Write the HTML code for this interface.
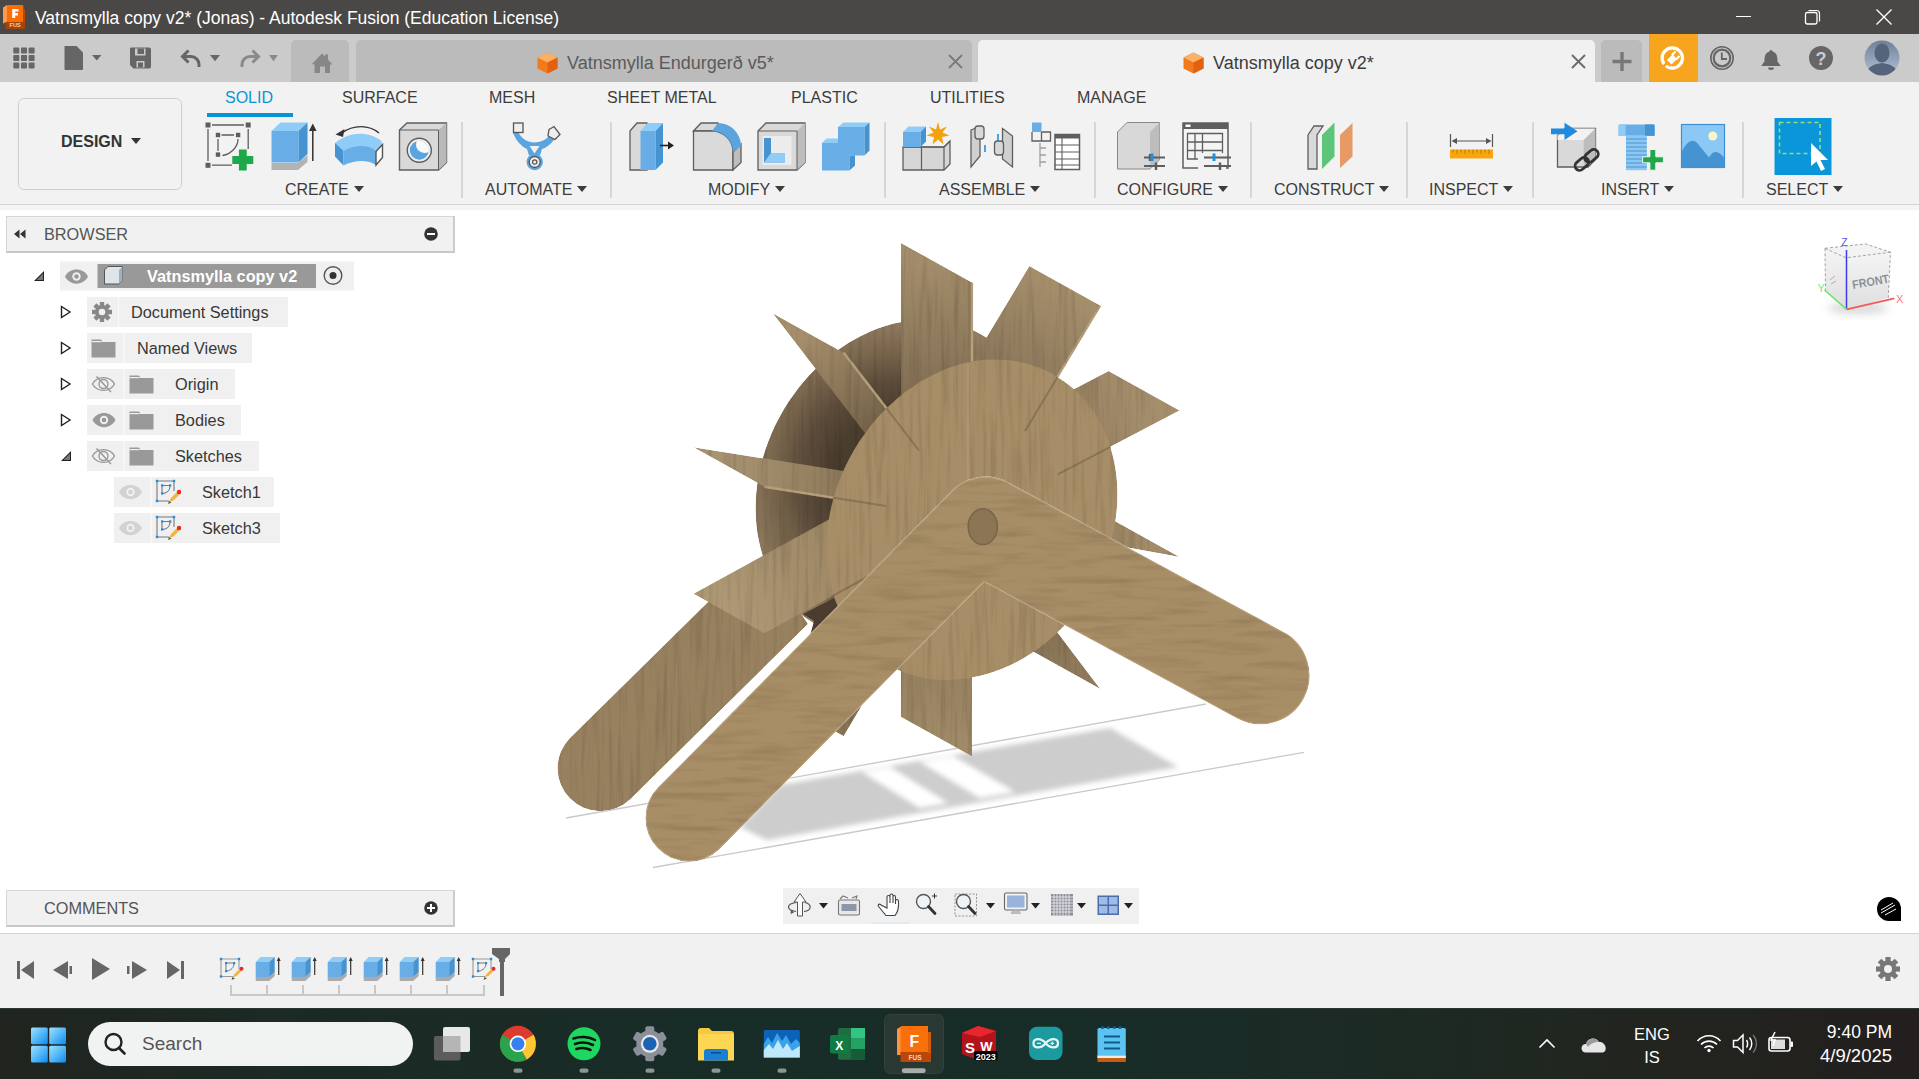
<!DOCTYPE html>
<html><head><meta charset="utf-8">
<style>
*{margin:0;padding:0;box-sizing:border-box}
html,body{width:1919px;height:1079px;overflow:hidden;background:#fff;font-family:"Liberation Sans",sans-serif;position:relative}
.a{position:absolute}
.t{position:absolute;white-space:nowrap;line-height:1}
#title{left:0;top:0;width:1919px;height:34px;background:#4a4846}
#tb{left:0;top:34px;width:1919px;height:48px;background:#cbcbcb}
#rib{left:0;top:82px;width:1919px;height:123px;background:#f2f2f2;border-bottom:1px solid #d3d3d3}
#rib2{left:0;top:205px;width:1919px;height:5px;background:#f4f4f4}
.rt{font-size:16px;color:#3c3c3c;top:90px}
.lbl{font-size:16px;color:#3c3c3c;top:182px}
.sep{position:absolute;top:122px;width:2px;height:76px;background:#d6d6d6}
.tri{display:inline-block;width:0;height:0;border-left:5px solid transparent;border-right:5px solid transparent;border-top:6px solid #3c3c3c;vertical-align:middle;margin-left:5px;position:relative;top:-2px}
#timeline{left:0;top:933px;width:1919px;height:75px;background:#f1f1f1;border-top:1px solid #d4d4d4}
#taskbar{left:0;top:1008px;width:1919px;height:71px;background:linear-gradient(90deg,#21241f 0%,#1c2924 14%,#182d28 40%,#192c27 62%,#1c2a24 72%,#22251f 84%,#231f1e 100%);border-top:1px solid #2c3633}
.row{position:absolute;height:30px;background:#f0f0f0}
.rowt{position:absolute;font-size:16px;color:#3a3a3a;top:7px;white-space:nowrap;line-height:1}
</style></head><body>

<!-- TITLE BAR -->
<div class="a" id="title">
  <svg class="a" style="left:0;top:0" width="34" height="34" viewBox="0 0 34 34">
    <path d="M3 7.5 L7 5 V22 L3 23.5Z" fill="#fb9a4c"/>
    <rect x="7" y="5" width="16.3" height="17" rx="1" fill="#fc6e04"/>
    <path d="M23.3 9 H25 V29 H23.3Z" fill="#b8480a"/>
    <path d="M5.5 22 H25 V29 H6.5 Q5.5 29 5.5 28Z" fill="#a4430b"/>
    <path d="M12.2 9 H18.5 V11.5 H15.2 V13 H18 V15.4 H15.2 V18 H12.2Z" fill="#fff"/>
    <text x="15.2" y="27.2" text-anchor="middle" font-family="Liberation Sans" font-weight="bold" font-size="5.6" fill="#f3d2bd">FUS</text>
  </svg>
  <div class="t" style="left:35px;top:10px;font-size:17.5px;color:#fff">Vatnsmylla copy v2* (Jonas) - Autodesk Fusion (Education License)</div>
  <div class="a" style="left:1736px;top:16px;width:15px;height:1.3px;background:#fff"></div>
  <svg class="a" style="left:1803px;top:8px" width="20" height="20" viewBox="0 0 20 20"><rect x="2.5" y="4.5" width="11.5" height="11.5" rx="1.8" fill="none" stroke="#fff" stroke-width="1.3"/><path d="M5.5 2.5 H13.5 a3 3 0 0 1 3 3 V13.5" fill="none" stroke="#fff" stroke-width="1.2"/></svg>
  <svg class="a" style="left:1874px;top:7px" width="20" height="20" viewBox="0 0 20 20"><path d="M2.5 2.5 L17.5 17.5 M17.5 2.5 L2.5 17.5" stroke="#fff" stroke-width="1.4"/></svg>
</div>

<!-- TOOLBAR -->
<div class="a" id="tb"></div>
<div class="a" style="left:291px;top:40px;width:58px;height:42px;background:#bbbbbb;border-radius:5px 5px 0 0"></div>
<div class="a" style="left:356px;top:40px;width:616px;height:42px;background:#bbbbbb;border-radius:5px 5px 0 0"></div>
<div class="a" style="left:978px;top:40px;width:617px;height:42px;background:#f1f1f1;border-radius:5px 5px 0 0"></div>
<div class="a" style="left:1601px;top:40px;width:41px;height:42px;background:#bbbbbb;border-radius:5px 5px 0 0"></div>
<div class="a" style="left:1649px;top:34px;width:49px;height:48px;background:#f7a51f"></div>
<!-- toolbar icons -->
<svg class="a" style="left:0;top:34px" width="350" height="48" viewBox="0 34 350 48">
  <g fill="#666">
    <rect x="13.3" y="47.5" width="6" height="6" rx="1"/><rect x="21" y="47.5" width="6" height="6" rx="1"/><rect x="28.6" y="47.5" width="6" height="6" rx="1"/>
    <rect x="13.3" y="55" width="6" height="6" rx="1"/><rect x="21" y="55" width="6" height="6" rx="1"/><rect x="28.6" y="55" width="6" height="6" rx="1"/>
    <rect x="13.3" y="62.5" width="6" height="6" rx="1"/><rect x="21" y="62.5" width="6" height="6" rx="1"/><rect x="28.6" y="62.5" width="6" height="6" rx="1"/>
    <path d="M64.5 46 H76.5 L83 52.5 V69 a1 1 0 0 1 -1 1 H65.5 a1 1 0 0 1 -1 -1Z"/>
    <path d="M92 55 H101.5 L96.75 60.5Z"/>
    <path d="M131 47.5 H149 a2 2 0 0 1 2 2 V66.5 a2 2 0 0 1 -2 2 H133.5 L130 65 V49.5 a2 2 0 0 1 1 -2Z"/>
    <path d="M210 55 H220 L215 61.3Z"/>
  </g>
  <g fill="#cbcbcb"><rect x="135" y="48.5" width="10.5" height="7" /><rect x="136.5" y="61" width="8" height="6.5"/></g>
  <rect x="137.5" y="48.5" width="6.5" height="5.5" fill="#666"/><rect x="138" y="62.5" width="5" height="5" fill="#666"/>
  <path d="M188.5 50.5 L182.5 56.5 L188.5 62.5 M183 56.5 H191 a8 8 0 0 1 8 8 V67" fill="none" stroke="#666" stroke-width="3"/>
  <path d="M252.5 50.5 L258.5 56.5 L252.5 62.5 M258 56.5 H250 a8 8 0 0 0 -8 8 V67" fill="none" stroke="#8a8a8a" stroke-width="3"/>
  <path d="M269 55 H278 L273.5 61.3Z" fill="#8a8a8a"/>
  <path d="M312 64 L322 53.5 L325 56.7 V54.5 H328 V59.8 L332.5 64.5 H330 V73 H325 V66.5 H320 V73 H314.5 V64.5 Z" fill="#878787"/>
</svg>
<svg class="a" style="left:536px;top:51px" width="24" height="24" viewBox="0 0 24 24">
  <path d="M11.5 1.5 L21.5 6.5 V17.5 L11.5 22.5 L1.5 17.5 V6.5Z" fill="#f07a1c"/>
  <path d="M11.5 1.5 L21.5 6.5 L11.5 11.5 L1.5 6.5Z" fill="#fbb067"/>
  <path d="M11.5 11.5 L21.5 6.5 V17.5 L11.5 22.5Z" fill="#e2610f"/>
</svg>
<svg class="a" style="left:1182px;top:51px" width="24" height="24" viewBox="0 0 24 24">
  <path d="M11.5 1.5 L21.5 6.5 V17.5 L11.5 22.5 L1.5 17.5 V6.5Z" fill="#f07a1c"/>
  <path d="M11.5 1.5 L21.5 6.5 L11.5 11.5 L1.5 6.5Z" fill="#fbb067"/>
  <path d="M11.5 11.5 L21.5 6.5 V17.5 L11.5 22.5Z" fill="#e2610f"/>
</svg>
<svg class="a" style="left:947px;top:53px" width="17" height="17" viewBox="0 0 17 17"><path d="M2 2 L15 15 M15 2 L2 15" stroke="#7a7a7a" stroke-width="1.8"/></svg>
<svg class="a" style="left:1570px;top:53px" width="17" height="17" viewBox="0 0 17 17"><path d="M2 2 L15 15 M15 2 L2 15" stroke="#6a6a6a" stroke-width="1.8"/></svg>
<svg class="a" style="left:1600px;top:34px" width="319" height="48" viewBox="1600 34 319 48">
  <path d="M1612.5 61.5 H1631.5 M1622 52 V71" stroke="#777" stroke-width="3.4"/>
  <circle cx="1672.3" cy="58" r="10.2" fill="none" stroke="#fff" stroke-width="3.2"/>
  <path d="M1665 62 L1672 55 L1676.5 59.5 L1669.5 66.5Z" fill="#f7a51f"/>
  <path d="M1667 60 L1672.5 54.5 L1677 59 L1671.5 64.5Z" fill="#fff"/>
  <path d="M1672 55 L1675.5 51.5 M1676 59.5 L1679.5 56" stroke="#fff" stroke-width="2.2"/>
  <path d="M1663 67 L1668 62" stroke="#f7a51f" stroke-width="2.5"/>
  <circle cx="1722" cy="58" r="11.2" fill="none" stroke="#666" stroke-width="1.6"/>
  <circle cx="1722" cy="58" r="8.3" fill="none" stroke="#666" stroke-width="2.2"/>
  <path d="M1721.8 52.5 V59 H1727" fill="none" stroke="#666" stroke-width="1.8"/>
  <path d="M1771 50 a1.6 1.6 0 0 1 1.6 1.6 C1777 53 1777.5 57 1777.5 61.5 L1780.8 66 H1761.2 L1764.5 61.5 C1764.5 57 1765 53 1769.4 51.6 A1.6 1.6 0 0 1 1771 50Z" fill="#666"/>
  <path d="M1768 67.5 a3 2.5 0 0 0 6 0Z" fill="#666"/>
  <circle cx="1821" cy="58" r="12" fill="#666"/>
  <text x="1821" y="65" text-anchor="middle" font-family="Liberation Sans" font-weight="bold" font-size="18" fill="#cbcbcb">?</text>
  <defs><linearGradient id="av" x1="0" y1="0" x2="0" y2="1"><stop offset="0" stop-color="#6d8098"/><stop offset="1" stop-color="#b3c2d6"/></linearGradient><clipPath id="avc"><circle cx="1882" cy="58" r="17.5"/></clipPath></defs>
  <circle cx="1882" cy="58" r="17.5" fill="url(#av)"/>
  <g clip-path="url(#avc)" fill="#55647a"><ellipse cx="1882" cy="53" rx="7.5" ry="9.5"/><path d="M1864 80 C1866 66 1874 64 1882 63 C1890 64 1898 66 1900 80Z"/></g>
</svg>
<div class="t" style="left:567px;top:54px;font-size:18px;color:#5a5a5a">Vatnsmylla Endurgerð v5*</div>
<div class="t" style="left:1213px;top:54px;font-size:18px;color:#3c3c3c">Vatnsmylla copy v2*</div>

<!-- RIBBON -->
<div class="a" id="rib"></div>
<div class="a" id="rib2"></div>
<div class="a" style="left:18px;top:98px;width:164px;height:92px;border:1.5px solid #cfcfcf;border-radius:6px"></div>
<div class="t" style="left:61px;top:134px;font-size:16px;font-weight:bold;color:#333">DESIGN<span class="tri" style="border-top-color:#333;margin-left:9px"></span></div>
<div class="t rt" style="left:225px;color:#0696d7">SOLID</div>
<div class="a" style="left:207px;top:113px;width:86px;height:4px;background:#0696d7"></div>
<div class="t rt" style="left:342px">SURFACE</div>
<div class="t rt" style="left:489px">MESH</div>
<div class="t rt" style="left:607px">SHEET METAL</div>
<div class="t rt" style="left:791px">PLASTIC</div>
<div class="t rt" style="left:930px">UTILITIES</div>
<div class="t rt" style="left:1077px">MANAGE</div>

<div class="t lbl" style="left:285px">CREATE<span class="tri"></span></div>
<div class="t lbl" style="left:485px">AUTOMATE<span class="tri"></span></div>
<div class="t lbl" style="left:708px">MODIFY<span class="tri"></span></div>
<div class="t lbl" style="left:939px">ASSEMBLE<span class="tri"></span></div>
<div class="t lbl" style="left:1117px">CONFIGURE<span class="tri"></span></div>
<div class="t lbl" style="left:1274px">CONSTRUCT<span class="tri"></span></div>
<div class="t lbl" style="left:1429px">INSPECT<span class="tri"></span></div>
<div class="t lbl" style="left:1601px">INSERT<span class="tri"></span></div>
<div class="t lbl" style="left:1766px">SELECT<span class="tri"></span></div>
<svg class="a" style="left:0;top:110px" width="1919" height="70" viewBox="0 110 1919 70">
 <!-- create sketch -->
 <g fill="#5e5e5e">
  <rect x="205.5" y="122.5" width="5" height="5"/><rect x="245.7" y="122.5" width="5" height="5"/><rect x="205.5" y="162.8" width="5" height="5"/>
  <rect x="215.8" y="132.8" width="4.4" height="4.4"/><rect x="235.9" y="132.8" width="4.4" height="4.4"/><rect x="215.8" y="152.4" width="4.4" height="4.4"/>
 </g>
 <path d="M212 125 H244 M208 129 V161 M212 165.2 H232 M248.2 129 V149 M221.5 135 H234 M218 139 V151 M238 139 C238 147 231 154 222.5 155.5" fill="none" stroke="#5e5e5e" stroke-width="1.3"/>
 <path d="M232.3 156.1 H238.9 V149.5 H246.7 V156.1 H253.3 V163.9 H246.7 V170.5 H238.9 V163.9 H232.3Z" fill="#1fa84a"/>
 <!-- extrude -->
 <path d="M271.5 163 H298 L307.5 155 V162 L298 170 H271.5Z" fill="#b3b3b3"/>
 <path d="M271.5 131 L280.5 122.5 H307.5 L298.5 131Z" fill="#8fcdf8"/>
 <rect x="271.5" y="131" width="27" height="31.5" fill="#68ade5"/>
 <path d="M298.5 131 L307.5 122.5 V154 L298.5 162.5Z" fill="#4593d0"/>
 <path d="M312.8 161 V128" stroke="#333" stroke-width="1.5"/><path d="M309 131 L312.8 123.5 L316.6 131Z" fill="#333"/>
 <!-- revolve -->
 <path d="M335 143 C350 131 368 131 381.5 141 L382.5 153.5 C369 145 350 145 336.5 155.5Z" fill="#8fcdf8"/>
 <path d="M335 143 L343.5 151 V165.5 L335 156.5Z" fill="#4593d0"/>
 <path d="M343.5 151 C354 145 368 144 376.5 151 L376.5 165.5 C368 159 354 160 343.5 165.5Z" fill="#68ade5"/>
 <path d="M376 151.5 L382.5 144.5 V157.5 L376 165Z" fill="#fff" stroke="#555" stroke-width="1.4"/>
 <path d="M342 133 C353 124.5 369 124.5 379 133" fill="none" stroke="#333" stroke-width="1.4"/><path d="M335.5 134.5 L344.5 129 L343 137Z" fill="#333"/>
 <!-- hole -->
 <path d="M399.5 130 L407 123 H446.5 V162.5 L438.5 170 H399.5Z" fill="#d9d9d9" stroke="#5e5e5e" stroke-width="1.4"/>
 <path d="M438.5 130 L446.5 123 V162.5 L438.5 170Z" fill="#b9b9b9"/>
 <path d="M399.5 130 H438.5 V170" fill="none" stroke="#5e5e5e" stroke-width="1"/>
 <circle cx="419.3" cy="150.3" r="12" fill="#eee" stroke="#5e5e5e" stroke-width="1.4"/>
 <clipPath id="hc"><circle cx="419.3" cy="150.3" r="9.6"/></clipPath><g clip-path="url(#hc)"><circle cx="419.3" cy="150.3" r="9.6" fill="#5aa5df"/><circle cx="424.5" cy="144.5" r="8.5" fill="#fafafa"/></g>
 <!-- automate -->
 <path d="M517 129.5 Q522 142 534.5 142.5 Q546 142 551 133.5 L555.5 138 Q549 147 542 149 L540 155.5 H529 L527 149 Q518 145 513 133Z" fill="#5aa5df"/>
 <path d="M529.5 146 H539.5 L534.5 153.5Z" fill="#f2f2f2"/>
 <circle cx="534.7" cy="162" r="8.2" fill="#5aa5df"/><circle cx="534.7" cy="162" r="5.5" fill="#eee" stroke="#555" stroke-width="1.3"/><circle cx="534.7" cy="162" r="2.2" fill="none" stroke="#555" stroke-width="1.2"/>
 <rect x="513.5" y="123" width="9.5" height="9.5" fill="#eee" stroke="#555" stroke-width="1.3"/>
 <path d="M549 129.5 L554 126.5 L560 134.5 L555 139.5 L548 136Z" fill="#eee" stroke="#555" stroke-width="1.3"/>
 <!-- press pull -->
 <path d="M630 131 L637 123 H647 V170 H630Z" fill="#d9d9d9" stroke="#5e5e5e" stroke-width="1.3"/>
 <path d="M640.5 131 L647.5 123 H663 L655.5 131Z" fill="#8fcdf8"/>
 <rect x="640.5" y="131" width="15" height="39" fill="#68ade5"/>
 <path d="M655.5 131 L663 123 V162.5 L655.5 170Z" fill="#4593d0"/>
 <path d="M660 145.5 H670" stroke="#222" stroke-width="1.6"/><path d="M668 141.5 L674 145.5 L668 149.5Z" fill="#222"/>
 <!-- fillet -->
 <path d="M693.5 131 L701 123 H718 L718 131Z" fill="#d9d9d9" stroke="#5e5e5e" stroke-width="1.3"/>
 <path d="M693.5 131 H712 A21 21 0 0 1 733 152 V170 H693.5Z" fill="#dadada" stroke="#5e5e5e" stroke-width="1.3"/>
 <path d="M733 152 L741 144 V162.5 L733 170Z" fill="#bdbdbd" stroke="#5e5e5e" stroke-width="1.3"/>
 <path d="M712 131 L718 123 A23 23 0 0 1 741 146 L733 152 A21 21 0 0 0 712 131Z" fill="#5aa5df"/>
 <!-- shell -->
 <path d="M758 131 L766 123 H805 V162.5 L797 170 H758Z" fill="#d9d9d9" stroke="#5e5e5e" stroke-width="1.3"/>
 <path d="M797 131 L805 123 V162.5 L797 170Z" fill="#bdbdbd"/>
 <path d="M758 131 H797 V170" fill="none" stroke="#5e5e5e" stroke-width="1"/>
 <rect x="762.5" y="136" width="29" height="29" fill="#ececec"/>
 <path d="M764 138 H771 V153 H785 V162.5 H764Z" fill="#4593d0"/>
 <path d="M771 153 H785 V162.5 H764Z" fill="#8fcdf8"/>
 <!-- combine -->
 <path d="M822 143 L826.5 138.5 H838 V143Z" fill="#8fcdf8"/>
 <path d="M838 127 L843.5 122.5 H869.5 L864.5 127Z" fill="#8fcdf8"/>
 <path d="M822 143 H838 V127 H864.5 V155.5 H849.5 V170.5 H822Z" fill="#68ade5"/>
 <path d="M864.5 127 L869.5 122.5 V150.5 L864.5 155.5Z" fill="#4593d0"/>
 <path d="M849.5 155.5 H855 V165.5 L849.5 170.5Z" fill="#4593d0"/>
 <!-- new component -->
 <path d="M903 158 V170 H944 L950 164 V141 L944 147 H903Z" fill="#d6d6d6" stroke="#5e5e5e" stroke-width="1.3"/>
 <path d="M903 147 H944 V170 M921.5 147 V170 M944 147 L950 141" fill="none" stroke="#5e5e5e" stroke-width="1.2"/>
 <path d="M903 132 L908.5 126.5 H926 L920.5 132Z" fill="#8fcdf8"/>
 <rect x="903" y="132" width="17.5" height="15" fill="#68ade5"/>
 <path d="M920.5 132 L926 126.5 V141.5 L920.5 147Z" fill="#4593d0"/>
 <path d="M938 122 L940 129.5 L947 126.5 L942.5 132.5 L949.5 135.5 L942 137 L943.5 144.5 L938 139.5 L932.5 144.5 L934 137 L926.5 135.5 L933.5 132.5 L929 126.5 L936 129.5Z" fill="#f3a10c"/>
 <!-- joint -->
 <path d="M971 130 L980 126.5 V156 L971 167Z" fill="#d0d0d0" stroke="#5e5e5e" stroke-width="1.3"/>
 <rect x="975" y="126" width="9" height="13" rx="3" fill="#d8d8d8" stroke="#5e5e5e" stroke-width="1.3"/>
 <path d="M1002.5 128.5 L1012.5 136 V167 L1002.5 159Z" fill="#d0d0d0" stroke="#5e5e5e" stroke-width="1.3"/>
 <rect x="994.5" y="141" width="9" height="14" rx="3" fill="#d8d8d8" stroke="#5e5e5e" stroke-width="1.3"/>
 <path d="M985 145 V152 M998 134 V142" stroke="#1e8fe0" stroke-width="1.6"/>
 <!-- bom -->
 <rect x="1032" y="122.5" width="9.5" height="9.5" fill="#68ade5"/>
 <path d="M1032 132 V141 H1050.5 V132 H1041.5 M1041.5 132 V141" fill="none" stroke="#5e5e5e" stroke-width="1.3"/>
 <path d="M1040 143 V167 M1040 148 H1046 M1040 155 H1046 M1040 162 H1046" fill="none" stroke="#a0a0a0" stroke-width="1.3"/>
 <rect x="1055" y="134.5" width="24.5" height="35" fill="#fff" stroke="#5e5e5e" stroke-width="1.5"/>
 <rect x="1055" y="134.5" width="24.5" height="4" fill="#5e5e5e"/>
 <path d="M1055 145 H1079.5 M1055 152 H1079.5 M1055 159 H1079.5 M1055 165 H1079.5 M1062 138 V169.5" stroke="#5e5e5e" stroke-width="1.1"/>
 <!-- configure cube -->
 <path d="M1117.5 132 L1127 122.5 H1159.5 V160 L1150 169 H1117.5Z" fill="#d8d8d8" stroke="#888" stroke-width="1"/>
 <path d="M1150 132 L1159.5 122.5 V160 L1150 169Z" fill="#bdbdbd"/>
 <path d="M1144 157.5 H1165 M1144 166 H1165" stroke="#5e5e5e" stroke-width="2.2"/>
 <path d="M1150 154 V161 M1156 162.5 V170" stroke="#5e5e5e" stroke-width="2.5"/>
 <rect x="1150.5" y="153.5" width="3" height="7.5" fill="#1e8fe0"/>
 <!-- configure table -->
 <rect x="1183" y="123" width="45" height="45" fill="#f4f4f4" stroke="#5e5e5e" stroke-width="1.5"/>
 <rect x="1183" y="123" width="45" height="6" fill="#5e5e5e"/><rect x="1185.5" y="124.5" width="5" height="2.5" fill="#fff"/>
 <path d="M1187.5 133.5 H1222.5 V159 H1187.5Z M1187.5 142 H1222.5 M1187.5 150.5 H1222.5 M1195 133.5 V159 M1202.5 133.5 V159" fill="none" stroke="#5e5e5e" stroke-width="1.3"/>
 <rect x="1198" y="153" width="28" height="16" fill="#f1f1f1"/>
 <path d="M1204 157.5 H1231 M1204 166 H1231" stroke="#5e5e5e" stroke-width="2.2"/>
 <path d="M1220 162.5 V170" stroke="#5e5e5e" stroke-width="2.5"/>
 <rect x="1212.5" y="153.5" width="3" height="7.5" fill="#1e8fe0"/>
 <!-- construct -->
 <path d="M1308 135 L1314 126 H1323 L1317 135 V169 H1308Z" fill="#d9d9d9" stroke="#5e5e5e" stroke-width="1.3"/>
 <path d="M1322 135 L1334.5 122.5 V156.5 L1322 169Z" fill="#5cc57a"/>
 <path d="M1340 135 L1352.5 123 V156.5 L1340 168Z" fill="#e79a63"/>
 <!-- inspect -->
 <path d="M1450.5 134 V147 M1492.5 134 V147 M1453 141 H1490" stroke="#555" stroke-width="1.2"/>
 <path d="M1451.5 141 L1457 138 V144Z M1491.5 141 L1486 138 V144Z" fill="#555"/>
 <rect x="1450" y="149.5" width="43" height="9" fill="#f5a70f"/>
 <path d="M1453 149.5 V152.5 M1457 149.5 V154 M1461 149.5 V152.5 M1465 149.5 V154 M1469 149.5 V152.5 M1473 149.5 V154 M1477 149.5 V152.5 M1481 149.5 V154 M1485 149.5 V152.5 M1489 149.5 V154" stroke="#b77400" stroke-width="0.9"/>
 <!-- insert derive -->
 <path d="M1557.5 136 L1565 128.5 H1595.5 V159.5 L1588 167 H1557.5Z" fill="#d9d9d9" stroke="#5e5e5e" stroke-width="1.3"/>
 <path d="M1557.5 136 L1565 128.5 H1595.5 L1583.75 140 H1557.5Z" fill="#f2f2f2"/>
 <path d="M1583.75 140 L1595.5 128.5 V159.5 L1583.75 167Z" fill="#bdbdbd"/>
 <path d="M1551 128.5 H1564.5 V122.8 L1577.5 131.2 L1564.5 140 V134.3 H1551Z" fill="#1e8ae0"/>
 <g transform="rotate(-40 1586.6 160)"><rect x="1573" y="155.5" width="15" height="9" rx="4.5" fill="none" stroke="#333" stroke-width="2.8"/><rect x="1585.5" y="155.5" width="15" height="9" rx="4.5" fill="none" stroke="#333" stroke-width="2.8"/></g>
 <!-- insert bolt -->
 <path d="M1618.6 127 Q1618.6 124.4 1621 124.4 H1652 Q1654.6 124.4 1654.6 127 V135.8 H1618.6Z" fill="#68ade5"/>
 <rect x="1618.6" y="124.4" width="7" height="11.4" fill="#8fcdf8"/><rect x="1645" y="124.4" width="9.6" height="11.4" fill="#4593d0"/>
 <rect x="1626" y="135.8" width="20.8" height="34.4" fill="#8cc6f2"/>
 <path d="M1626 139 H1647 M1626 143 H1647 M1626 147 H1647 M1626 151 H1647 M1626 155 H1647 M1626 159 H1647 M1626 163 H1647 M1626 167 H1647" stroke="#4a96d2" stroke-width="1.1"/>
 <path d="M1642.6 156.8 H1649.9 V149.5 H1655.8 V156.8 H1663.4 V162.8 H1655.8 V170.2 H1649.9 V162.8 H1642.6Z" fill="#1fa84a" stroke="#f2f2f2" stroke-width="1"/>
 <!-- insert image -->
 <rect x="1681.5" y="124.5" width="43" height="43" fill="#8cc8f5" stroke="#3d8fcf" stroke-width="1.2"/>
 <path d="M1681.5 152 C1688 140 1693 138 1698 144 L1709 157.5 C1713 150 1718 150 1724.5 158 V167.5 H1681.5Z" fill="#4593d0"/>
 <circle cx="1712.8" cy="136" r="4.5" fill="#f8f6c8"/>
 <!-- select -->
 <rect x="1774.5" y="118" width="57" height="57" fill="#0a96d8"/>
 <rect x="1779.5" y="122.5" width="40.5" height="31" fill="none" stroke="#8fe07f" stroke-width="1.6" stroke-dasharray="4 3"/>
 <path d="M1811 143 V166 L1816.5 161.5 L1821 171 L1825 169 L1820.5 160 H1828Z" fill="#fff"/>
</svg>
<div class="sep" style="left:461px"></div>
<div class="sep" style="left:610px"></div>
<div class="sep" style="left:884px"></div>
<div class="sep" style="left:1094px"></div>
<div class="sep" style="left:1250px"></div>
<div class="sep" style="left:1406px"></div>
<div class="sep" style="left:1532px"></div>
<div class="sep" style="left:1742px"></div>

<!--MODEL--><svg class="a" style="left:0;top:0" width="1919" height="1079" viewBox="0 0 1919 1079">
<defs>
<filter id="blur3" x="-20%" y="-20%" width="140%" height="140%"><feGaussianBlur stdDeviation="2.5"/></filter>
<filter id="blur8" x="-50%" y="-50%" width="200%" height="200%"><feGaussianBlur stdDeviation="10"/></filter>
<radialGradient id="gBack" gradientUnits="userSpaceOnUse" cx="901.0" cy="479.9" r="160"><stop offset="0" stop-color="#3a3024"/><stop offset="0.42" stop-color="#4a3d2e"/><stop offset="0.62" stop-color="#5c4c3a"/><stop offset="0.8" stop-color="#78654c"/><stop offset="0.93" stop-color="#89745a"/><stop offset="1" stop-color="#937e5f"/></radialGradient>
<linearGradient id="gb290" gradientUnits="userSpaceOnUse" x1="936.5" y1="262.6" x2="936.5" y2="412.8"><stop offset="0" stop-color="#a38d6b"/><stop offset="1" stop-color="#7d6a51"/></linearGradient>
<linearGradient id="gb254" gradientUnits="userSpaceOnUse" x1="1064.8" y1="285.9" x2="983.5" y2="421.3"><stop offset="0" stop-color="#a58f6c"/><stop offset="1" stop-color="#7f6c52"/></linearGradient>
<linearGradient id="gb218" gradientUnits="userSpaceOnUse" x1="1144.1" y1="390.7" x2="1012.6" y2="459.7"><stop offset="0" stop-color="#a68f6c"/><stop offset="1" stop-color="#8a7657"/></linearGradient>
<linearGradient id="gb182" gradientUnits="userSpaceOnUse" x1="1144.1" y1="537.2" x2="1012.6" y2="513.4"><stop offset="0" stop-color="#a38c69"/><stop offset="1" stop-color="#7e6a50"/></linearGradient>
<linearGradient id="gb146" gradientUnits="userSpaceOnUse" x1="1064.8" y1="669.3" x2="983.5" y2="561.9"><stop offset="0" stop-color="#8f7a5b"/><stop offset="1" stop-color="#6e5c45"/></linearGradient>
<linearGradient id="gb110" gradientUnits="userSpaceOnUse" x1="936.5" y1="736.6" x2="936.5" y2="586.5"><stop offset="0" stop-color="#a08a67"/><stop offset="1" stop-color="#8b7658"/></linearGradient>
<linearGradient id="gb74" gradientUnits="userSpaceOnUse" x1="808.2" y1="716.5" x2="889.5" y2="579.2"><stop offset="0" stop-color="#8a7556"/><stop offset="1" stop-color="#6e5c45"/></linearGradient>
<linearGradient id="gb38" gradientUnits="userSpaceOnUse" x1="728.9" y1="613.5" x2="860.4" y2="541.4"><stop offset="0" stop-color="#ae9875"/><stop offset="1" stop-color="#9a8461"/></linearGradient>
<linearGradient id="gb362" gradientUnits="userSpaceOnUse" x1="728.9" y1="467.1" x2="860.4" y2="487.7"><stop offset="0" stop-color="#a89371"/><stop offset="1" stop-color="#8a7657"/></linearGradient>
<linearGradient id="gb326" gradientUnits="userSpaceOnUse" x1="808.2" y1="333.0" x2="889.5" y2="438.6"><stop offset="0" stop-color="#a68f6c"/><stop offset="1" stop-color="#6e5c44"/></linearGradient>
<filter id="grainV" filterUnits="userSpaceOnUse" x="540" y="230" width="800" height="650"><feTurbulence type="fractalNoise" baseFrequency="0.22 0.012" numOctaves="3" seed="7" result="n"/><feColorMatrix in="n" type="matrix" values="0 0 0 -0.55 1.25  0 0 0 -0.55 1.25  0 0 0 -0.55 1.25  0 0 0 0 1" result="m"/><feBlend in="SourceGraphic" in2="m" mode="multiply" result="b"/><feComposite in="b" in2="SourceGraphic" operator="in"/></filter>
<filter id="grainH" filterUnits="userSpaceOnUse" x="540" y="230" width="800" height="650"><feTurbulence type="fractalNoise" baseFrequency="0.015 0.13" numOctaves="3" seed="11" result="n"/><feColorMatrix in="n" type="matrix" values="0 0 0 -0.55 1.25  0 0 0 -0.55 1.25  0 0 0 -0.55 1.25  0 0 0 0 1" result="m"/><feBlend in="SourceGraphic" in2="m" mode="multiply" result="b"/><feComposite in="b" in2="SourceGraphic" operator="in"/></filter>
</defs>
<g filter="url(#blur3)">
<polygon points="780,785 1110,728 1178,767 767,840 740,827" fill="#cdcdcd"/>
<polygon points="862,772 890,767 948,803 920,808" fill="#ffffff"/>
<polygon points="920,762 953,756 1015,792 980,798" fill="#ffffff"/>
</g>
<line x1="566" y1="818" x2="1206" y2="704" stroke="#c9c9c9" stroke-width="1.3"/>
<line x1="653" y1="867.5" x2="1304" y2="752.4" stroke="#c9c9c9" stroke-width="1.3"/>
<g filter="url(#grainV)">
<path d="M714,596 L569.9,738 A43 43 0 0 0 630.1,799.4 L808,624 L800,612Z" fill="#98815f"/>
<polygon points="1046.5,454.9 1046.3,446.7 1045.7,438.5 1044.7,430.5 1043.3,422.6 1041.5,414.9 1039.4,407.3 1036.8,399.9 1033.9,392.8 1030.6,385.9 1027.0,379.2 1023.0,372.9 1018.7,366.8 1014.1,361.0 1009.1,355.6 1003.9,350.5 998.4,345.8 992.6,341.4 986.5,337.4 980.2,333.8 973.8,330.6 967.1,327.8 960.2,325.4 953.1,323.4 946.0,321.9 938.7,320.8 931.3,320.2 923.8,319.9 916.2,320.2 908.6,320.8 901.0,321.9 893.4,323.6 885.8,325.7 878.2,328.3 870.7,331.3 863.3,334.7 856.0,338.4 848.9,342.6 841.8,347.2 834.9,352.1 828.2,357.3 821.8,362.9 815.5,368.8 809.4,375.0 803.6,381.6 798.1,388.3 792.9,395.4 787.9,402.6 783.3,410.1 779.0,417.7 775.0,425.6 771.4,433.6 768.1,441.7 765.2,449.9 762.6,458.2 760.5,466.5 758.7,474.9 757.3,483.3 756.3,491.7 755.7,500.1 755.5,508.4 755.7,516.6 756.3,524.8 757.3,532.8 758.7,540.6 760.5,548.3 762.6,555.8 765.2,563.1 768.1,570.2 771.4,577.0 775.0,583.6 779.0,589.9 783.3,595.8 787.9,601.5 792.9,606.8 798.1,611.8 803.6,616.4 809.4,620.6 815.5,624.5 821.8,627.9 828.2,631.0 834.9,633.6 841.8,635.8 848.9,637.6 856.0,639.0 863.3,639.9 870.7,640.4 878.2,640.4 885.8,640.0 893.4,639.2 901.0,637.9 908.6,636.4 916.2,634.4 923.8,632.0 931.3,629.2 938.7,626.0 946.0,622.4 953.1,618.4 960.2,614.1 967.1,609.3 973.8,604.2 980.2,598.8 986.5,593.0 992.6,587.0 998.4,580.6 1003.9,573.9 1009.1,567.0 1014.1,559.9 1018.7,552.5 1023.0,545.0 1027.0,537.2 1030.6,529.4 1033.9,521.3 1036.8,513.2 1039.4,504.9 1041.5,496.6 1043.3,488.3 1044.7,479.9 1045.7,471.6 1046.3,463.2" fill="url(#gBack)"/>
<polygon points="946.3,486.1 843.7,352.8 772.7,313.3 875.3,446.6" fill="url(#gb326)"/>
<polygon points="972.0,472.0 972.0,282.4 901.0,242.9 901.0,432.5" fill="url(#gb290)"/>
<polygon points="997.7,476.6 1100.3,305.6 1029.3,266.1 926.7,437.1" fill="url(#gb254)"/>
<polygon points="1013.5,497.6 1179.6,410.5 1108.6,371.0 942.5,458.1" fill="url(#gb218)"/>
<polygon points="930.5,512.9 764.4,486.8 693.4,447.3 859.5,473.4" fill="url(#gb362)"/>
<polygon points="1013.5,526.9 1179.6,557.0 1108.6,517.5 942.5,487.4" fill="url(#gb182)"/>
<polygon points="997.7,553.3 1100.3,689.1 1029.3,649.6 926.7,513.8" fill="url(#gb146)"/>
<polygon points="930.5,542.2 764.4,633.3 693.4,593.8 859.5,502.7" fill="url(#gb38)"/>
<polygon points="946.3,562.8 843.7,736.3 772.7,696.8 875.3,523.3" fill="url(#gb74)"/>
<polygon points="972.0,566.8 972.0,756.4 901.0,716.9 901.0,527.3" fill="url(#gb110)"/>
<line x1="972.0" y1="282.4" x2="972.0" y2="361.4" stroke="#b7a07c" stroke-width="2.4"/>
<line x1="1100.3" y1="305.6" x2="1057.5" y2="376.9" stroke="#b7a07c" stroke-width="2.4"/>
<line x1="764.4" y1="486.8" x2="833.6" y2="497.7" stroke="#b7a07c" stroke-width="2.4"/>
<line x1="843.7" y1="352.8" x2="886.5" y2="408.3" stroke="#b7a07c" stroke-width="2.4"/>
<polygon points="1117.5,494.4 1117.3,486.2 1116.7,478.0 1115.7,470.0 1114.3,462.1 1112.5,454.4 1110.4,446.8 1107.8,439.4 1104.9,432.3 1101.6,425.4 1098.0,418.7 1094.0,412.4 1089.7,406.3 1085.1,400.5 1080.1,395.1 1074.9,390.0 1069.4,385.3 1063.6,380.9 1057.5,376.9 1051.2,373.3 1044.8,370.1 1038.1,367.3 1031.2,364.9 1024.1,362.9 1017.0,361.4 1009.7,360.3 1002.3,359.7 994.8,359.4 987.2,359.7 979.6,360.3 972.0,361.4 964.4,363.1 956.8,365.2 949.2,367.8 941.7,370.8 934.3,374.2 927.0,377.9 919.9,382.1 912.8,386.7 905.9,391.6 899.2,396.8 892.8,402.4 886.5,408.3 880.4,414.5 874.6,421.1 869.1,427.8 863.9,434.9 858.9,442.1 854.3,449.6 850.0,457.2 846.0,465.1 842.4,473.1 839.1,481.2 836.2,489.4 833.6,497.7 831.5,506.0 829.7,514.4 828.3,522.8 827.3,531.2 826.7,539.6 826.5,547.9 826.7,556.1 827.3,564.3 828.3,572.3 829.7,580.1 831.5,587.8 833.6,595.3 836.2,602.6 839.1,609.7 842.4,616.5 846.0,623.1 850.0,629.4 854.3,635.3 858.9,641.0 863.9,646.3 869.1,651.3 874.6,655.9 880.4,660.1 886.5,664.0 892.8,667.4 899.2,670.5 905.9,673.1 912.8,675.3 919.9,677.1 927.0,678.5 934.3,679.4 941.7,679.9 949.2,679.9 956.8,679.5 964.4,678.7 972.0,677.4 979.6,675.9 987.2,673.9 994.8,671.5 1002.3,668.7 1009.7,665.5 1017.0,661.9 1024.1,657.9 1031.2,653.6 1038.1,648.8 1044.8,643.7 1051.2,638.3 1057.5,632.5 1063.6,626.5 1069.4,620.1 1074.9,613.4 1080.1,606.5 1085.1,599.4 1089.7,592.0 1094.0,584.5 1098.0,576.7 1101.6,568.9 1104.9,560.8 1107.8,552.7 1110.4,544.4 1112.5,536.1 1114.3,527.8 1115.7,519.4 1116.7,511.1 1117.3,502.7" fill="#a88e67"/>
<line x1="886.5" y1="408.3" x2="919.0" y2="450.5" stroke="#8a7557" stroke-width="2"/>
<line x1="1057.5" y1="376.9" x2="1025.0" y2="431.0" stroke="#8a7557" stroke-width="2"/>
<line x1="1110.4" y1="446.8" x2="1057.8" y2="474.4" stroke="#8a7557" stroke-width="2"/>
<line x1="833.6" y1="497.7" x2="886.2" y2="505.9" stroke="#8a7557" stroke-width="2"/>
<line x1="1110.4" y1="544.4" x2="1057.8" y2="534.9" stroke="#8a7557" stroke-width="2"/>
<line x1="833.6" y1="595.3" x2="886.2" y2="566.5" stroke="#8a7557" stroke-width="2"/>
</g>
<polygon points="803,614 834,598 838,607 810,636 814,621" fill="#4a3d2f"/>
<line x1="968" y1="364" x2="968" y2="486" stroke="#b59d79" stroke-width="1.2"/>
<g filter="url(#grainH)">
<path d="M949.8,493.8 A47 47 0 0 1 1008,483 L1282.6,632.1 A48.5 48.5 0 0 1 1238.4,718.5 L984,581 L718.6,849.2 A43 43 0 0 1 658.4,787.8 Z" fill="#a88e66" stroke="#b8a07a" stroke-width="1.3"/>
</g>
<ellipse cx="982.8" cy="526.7" rx="14.6" ry="17.9" fill="#8c7555" stroke="#7a6449" stroke-width="1.5"/>
</svg><!--/MODEL-->
<!-- BROWSER -->
<div class="a" style="left:6px;top:216px;width:449px;height:37px;background:#f1f1f1;border:1px solid #d6d6d6;border-bottom:2px solid #c8c8c8;border-right:2px solid #cbcbcb"></div>
<div class="t" style="left:44px;top:226px;font-size:16.3px;color:#555">BROWSER</div>

<svg class="a" style="left:0;top:0" width="460" height="560" viewBox="0 0 460 560">
 <defs>
  <symbol id="eye" viewBox="0 0 24 16"><path d="M0.5 8 C5 -1.5 19 -1.5 23.5 8 C19 17.5 5 17.5 0.5 8Z"/><circle cx="12" cy="8" r="4.2" fill="#f0f0f0"/><circle cx="12" cy="8" r="2.3"/></symbol>
  <symbol id="eyeoff" viewBox="0 0 24 18"><path d="M1 9 C5.5 0.5 18.5 0.5 23 9 C18.5 17.5 5.5 17.5 1 9Z M7.5 9 a4.5 4.5 0 0 0 9 0 a4.5 4.5 0 0 0 -9 0Z" fill="none" stroke="#999" stroke-width="1.4"/><path d="M5 1.5 L19.5 17" stroke="#999" stroke-width="1.5"/></symbol>
  <symbol id="fold" viewBox="0 0 25 20"><path d="M0.5 1.5 H10 L11 3 V4 H24.5 V19.5 H0.5Z" fill="#999"/><rect x="0.5" y="3" width="10" height="1.2" fill="#f0f0f0"/></symbol>
  <symbol id="skt" viewBox="0 0 26 26"><path d="M2 2 H19 M2 2 V22 H14 M19 2 V12" fill="none" stroke="#777" stroke-width="1.1"/><path d="M7 6.5 H15 M7 6.5 V14 M15 7 C15 11 12 14 8 14.5" fill="none" stroke="#777" stroke-width="1.1"/><g fill="#1e8fe0"><rect x="0.8" y="0.8" width="2.4" height="2.4"/><rect x="17.8" y="0.8" width="2.4" height="2.4"/><rect x="0.8" y="20.8" width="2.4" height="2.4"/><rect x="6" y="5.3" width="2.3" height="2.3"/><rect x="14" y="5.3" width="2.3" height="2.3"/><rect x="6" y="13.3" width="2.3" height="2.3"/></g><path d="M14 23 L16 19 L23 12 L25.5 14.5 L18.5 21.5Z" fill="#f3b43c"/><circle cx="24" cy="13" r="2.2" fill="#e8282c"/><path d="M13 25 L14 22 L16.5 23.5Z" fill="#555"/></symbol>
 </defs>
 <!-- root row -->
 <rect x="60" y="261.5" width="294" height="29" fill="#f0f0f0"/>
 <rect x="97.5" y="264" width="218.5" height="24" fill="#999"/>
 <path d="M34 281 L44 271 V281Z" fill="#222"/><path d="M36.5 280 L43 273.5 V280Z" fill="#777"/>
 <use href="#eye" x="64.5" y="268.5" width="24" height="16" fill="#999"/>
 <path d="M104.5 270 L108 266.5 H122.5 V280 L119 284 H104.5Z" fill="#dfe3ea" stroke="#555" stroke-width="1"/>
 <path d="M119 270 L122.5 266.5 V280 L119 284Z" fill="#a4afbe"/>
 <text x="147" y="282" font-family="Liberation Sans" font-weight="bold" font-size="16.3" fill="#fff">Vatnsmylla copy v2</text>
 <circle cx="333" cy="275.5" r="8.8" fill="#eee" stroke="#555" stroke-width="1.4"/><circle cx="333" cy="275.5" r="3.5" fill="#333"/>
 <!-- rows -->
 <g fill="#f0f0f0">
  <rect x="87" y="297" width="201" height="30"/>
  <rect x="87" y="333" width="165" height="30"/>
  <rect x="87" y="369" width="148" height="30"/>
  <rect x="87" y="405" width="154" height="30"/>
  <rect x="87" y="441" width="172" height="30"/>
  <rect x="114" y="477" width="160" height="30"/>
  <rect x="114" y="513" width="166" height="30"/>
 </g>
 <g stroke="#fafafa" stroke-width="1.2">
  <path d="M118.6 297 V327 M124 333 V363 M124 369 V399 M124 405 V435 M124 441 V471 M151 477 V507 M151 513 V543"/>
 </g>
 <g fill="none" stroke="#222" stroke-width="1.4">
  <path d="M61.5 306.5 L70 312 L61.5 317.5Z"/>
  <path d="M61.5 342.5 L70 348 L61.5 353.5Z"/>
  <path d="M61.5 378.5 L70 384 L61.5 389.5Z"/>
  <path d="M61.5 414.5 L70 420 L61.5 425.5Z"/>
 </g>
 <path d="M61 461 L71 451 V461Z" fill="#222"/><path d="M63.5 460 L70 453.5 V460Z" fill="#777"/>
 <!-- gear -->
 <g transform="translate(102,312)" fill="#888">
  <circle r="7"/>
  <g><rect x="-2.2" y="-10" width="4.4" height="20"/><rect x="-2.2" y="-10" width="4.4" height="20" transform="rotate(45)"/><rect x="-2.2" y="-10" width="4.4" height="20" transform="rotate(90)"/><rect x="-2.2" y="-10" width="4.4" height="20" transform="rotate(135)"/></g>
  <circle r="3.3" fill="#f0f0f0"/>
 </g>
 <use href="#fold" x="91" y="338" width="25" height="20"/>
 <use href="#eyeoff" x="91.5" y="375" width="24" height="18"/>
 <use href="#fold" x="129" y="374" width="25" height="20"/>
 <use href="#eye" x="92" y="412" width="24" height="16" fill="#999"/>
 <use href="#fold" x="129" y="410" width="25" height="20"/>
 <use href="#eyeoff" x="91.5" y="447" width="24" height="18"/>
 <use href="#fold" x="129" y="446" width="25" height="20"/>
 <use href="#eye" x="118.5" y="484" width="24" height="16" fill="#d2d2d2"/>
 <use href="#skt" x="155" y="479" width="26" height="26"/>
 <use href="#eye" x="118.5" y="520" width="24" height="16" fill="#d2d2d2"/>
 <use href="#skt" x="155" y="515" width="26" height="26"/>
 <g font-family="Liberation Sans" font-size="16.3" fill="#383838">
  <text x="131" y="318">Document Settings</text>
  <text x="137" y="354">Named Views</text>
  <text x="175" y="390">Origin</text>
  <text x="175" y="426">Bodies</text>
  <text x="175" y="462">Sketches</text>
  <text x="202" y="498">Sketch1</text>
  <text x="202" y="534">Sketch3</text>
 </g>
 <path d="M14 234 L19.5 229.5 V238.5Z M20 234 L25.5 229.5 V238.5Z" fill="#333"/>
 <circle cx="431" cy="234" r="6.8" fill="#333"/><rect x="427" y="233" width="8" height="2" fill="#fff"/>
</svg>
<!-- COMMENTS -->
<div class="a" style="left:6px;top:890px;width:449px;height:37px;background:#f1f1f1;border:1px solid #d6d6d6;border-bottom:2px solid #c8c8c8;border-right:2px solid #cbcbcb"></div>
<div class="t" style="left:44px;top:900px;font-size:16.3px;color:#555">COMMENTS</div>

<svg class="a" style="left:0;top:0" width="1919" height="1079" viewBox="0 0 1919 1079">
 <!-- viewcube -->
 <defs>
  <filter id="vcs" x="-50%" y="-50%" width="200%" height="200%"><feGaussianBlur stdDeviation="4"/></filter>
  <linearGradient id="vcf" x1="0" y1="0" x2="0" y2="1"><stop offset="0" stop-color="#f5f5f5"/><stop offset="1" stop-color="#dedede"/></linearGradient>
 </defs>
 <ellipse cx="1858" cy="308" rx="30" ry="6" fill="#c8c8c8" filter="url(#vcs)" opacity="0.7"/>
 <path d="M1825 248.3 L1865.5 243.9 L1890.5 252.2 L1846 257.8Z" fill="#f3f3f3"/>
 <path d="M1846 257.8 L1890.5 252.2 L1888.3 297.8 L1846.7 309.4Z" fill="url(#vcf)"/>
 <path d="M1825 248.3 L1846 257.8 L1846.7 309.4 L1825.5 291Z" fill="url(#vcf)"/>
 <path d="M1825 248.3 L1865.5 243.9 L1890.5 252.2 L1888.3 297.8 M1825 248.3 L1825.5 291 M1825 248.3 L1846 257.8 L1890.5 252.2" fill="none" stroke="#9a9a9a" stroke-width="0.9" stroke-dasharray="3 2"/>
 <text x="0" y="0" transform="translate(1853,289) rotate(-10) scale(0.9,1)" font-family="Liberation Sans" font-weight="bold" font-size="12" fill="#8e9196">FRONT</text>
 <path d="M1830 280 L1835 276 M1831 284 L1836 281" stroke="#b0b0b0" stroke-width="1"/>
 <path d="M1846.5 250 V309.5" stroke="#3b3bf0" stroke-width="1.5"/>
 <path d="M1846.7 309.4 L1894.4 298.3" stroke="#f05a5a" stroke-width="1.7"/>
 <path d="M1846.7 309.4 L1824.4 290" stroke="#6be26b" stroke-width="1.5"/>
 <text x="1841" y="246" font-family="Liberation Sans" font-size="11" fill="#5a5af5">Z</text>
 <text x="1896" y="303" font-family="Liberation Sans" font-size="11" fill="#f77">X</text>
 <text x="1817.5" y="292" font-family="Liberation Sans" font-size="11" fill="#7de87d">Y</text>
 <!-- comments plus -->
 <circle cx="431" cy="908" r="6.8" fill="#333"/><path d="M427 908 H435 M431 904 V912" stroke="#fff" stroke-width="2"/>
 <!-- nav bar -->
 <rect x="783" y="888" width="356" height="36" fill="#f0f0f0"/>
 <rect x="871" y="922.5" width="39" height="1.2" fill="#d5e6f5"/>
 <g fill="#222">
  <path d="M819 903 H828 L823.5 908.5Z"/><path d="M986 903 H995 L990.5 908.5Z"/><path d="M1031 903 H1040 L1035.5 908.5Z"/><path d="M1077 903 H1086 L1081.5 908.5Z"/><path d="M1124 903 H1133 L1128.5 908.5Z"/>
 </g>
 <!-- orbit -->
 <path d="M797.5 916 V902 H794 L800 893.5 L806 902 H802.5 V916Z" fill="#fafafa" stroke="#555" stroke-width="1"/>
 <path d="M796 902.5 C786 904 786 910 796 911.5 M804 911.5 C812 910.5 812 904 805 902.5" fill="none" stroke="#555" stroke-width="1.2"/>
 <path d="M791 909.5 L794 912.5 L790.5 914Z" fill="#555"/>
 <!-- look at -->
 <rect x="838.5" y="900" width="21" height="15" rx="1.5" fill="#e8e8e8" stroke="#777" stroke-width="1.1"/>
 <rect x="841.5" y="904" width="15" height="7" fill="#8d96a8"/>
 <path d="M840 899 L843 896 L848 898 M852 898 L857 896 L856 899" fill="none" stroke="#777" stroke-width="1.1"/>
 <!-- hand -->
 <path d="M881 905 C879 903 877 905 879 907 L886 915.5 H895 C898 912 899 908 898.5 901 C898 899 896 899 895.5 901 V904 V897 C895.5 895 893 895 893 897 V903 V895.5 C893 893.5 890 893.5 890 895.5 V903 V897 C890 895 887 895 887 897 V908Z" fill="#fff" stroke="#444" stroke-width="1.1"/>
 <!-- zoom -->
 <circle cx="923.5" cy="901.5" r="7" fill="#eef3f7" stroke="#555" stroke-width="1.4"/>
 <path d="M928.5 906.5 L935 913.5" stroke="#333" stroke-width="2.8" stroke-linecap="round"/>
 <path d="M932 896 H937 M934.5 893.5 V898.5" stroke="#333" stroke-width="1"/>
 <!-- fit -->
 <rect x="955" y="894" width="21.5" height="22" fill="none" stroke="#888" stroke-width="0.9" stroke-dasharray="2 1.5"/>
 <circle cx="963.5" cy="901.5" r="7" fill="#eef3f7" stroke="#555" stroke-width="1.4"/>
 <path d="M968.5 906.5 L975 913.5" stroke="#333" stroke-width="2.8" stroke-linecap="round"/>
 <!-- display -->
 <rect x="1004.5" y="893" width="22.5" height="17" rx="1.5" fill="#f3f3f3" stroke="#666" stroke-width="1.1"/>
 <rect x="1007" y="895.5" width="17.5" height="12" fill="#98b4dd"/>
 <path d="M1012 910.5 H1019.5 L1021 914 H1010.5Z" fill="#bbb"/>
 <!-- grid -->
 <rect x="1051" y="894" width="22" height="21.5" fill="#8b8e96"/>
 <path d="M1051 897 H1073 M1051 900 H1073 M1051 903 H1073 M1051 906 H1073 M1051 909 H1073 M1051 912 H1073 M1054 894 V915.5 M1057 894 V915.5 M1060 894 V915.5 M1063 894 V915.5 M1066 894 V915.5 M1069 894 V915.5" stroke="#e9e9ee" stroke-width="0.9"/>
 <!-- viewports -->
 <rect x="1097.5" y="895.5" width="21.5" height="19.5" fill="#4a6fa8"/>
 <rect x="1099" y="897" width="8.5" height="7.5" fill="#9fbbe6"/><rect x="1109" y="897" width="8.5" height="7.5" fill="#9fbbe6"/><rect x="1099" y="906" width="8.5" height="7.5" fill="#9fbbe6"/><rect x="1109" y="906" width="8.5" height="7.5" fill="#9fbbe6"/>
 <!-- bottom-right round icon -->
 <path d="M1889 897 A12 12 0 1 0 1889 921 H1901 V909 A12 12 0 0 0 1889 897Z" fill="#000"/>
 <path d="M1881 910 L1893 903 M1881 913 L1895 905 M1885 915 L1896 909" stroke="#fff" stroke-width="1"/>
</svg>
<!-- TIMELINE -->
<div class="a" id="timeline"></div>

<!-- TASKBAR -->
<div class="a" id="taskbar"></div>
<div class="a" style="left:88px;top:1022px;width:325px;height:44px;border-radius:22px;background:#f1f3f2"></div>
<div class="t" style="left:142px;top:1034px;font-size:19px;color:#555">Search</div>
<svg class="a" style="left:0;top:933px" width="1919" height="146" viewBox="0 933 1919 146">
 <!-- timeline -->
 <g fill="#666">
  <rect x="17" y="961" width="3" height="18"/><path d="M34 961 L21 970 L34 979Z"/>
  <path d="M53 970 L68 961 V979Z"/><rect x="69.5" y="966" width="2.5" height="8"/>
  <path d="M92 958 L110 969 L92 980Z"/>
  <rect x="127" y="966" width="2.5" height="8"/><path d="M132 961 L147 970 L132 979Z"/>
  <path d="M167 961 L180 970 L167 979Z"/><rect x="181" y="961" width="3" height="18"/>
 </g>
 <defs>
  <g id="tlext"><path d="M0 20 H13.5 L19 15 V19 L13.5 24 H0Z" fill="#aaa"/><path d="M0 5 L5 0 H19 L13.5 5Z" fill="#8fcdf8"/><rect x="0" y="5" width="13.5" height="15" fill="#68ade5"/><path d="M13.5 5 L19 0 V15 L13.5 20Z" fill="#4593d0"/><path d="M23 18 V2" stroke="#333" stroke-width="1.2"/><path d="M21 4 L23 0 L25 4Z" fill="#333"/></g>
  <g id="tlskt"><path d="M2 2 H20 M2 2 V19.5 H14 M20 2 V12" fill="none" stroke="#999" stroke-width="1.1"/><path d="M7 6 H15 M7 6 V14 M15 6.5 C15 10.5 12 13.5 8 14" fill="none" stroke="#777" stroke-width="1"/><g fill="#1e8fe0"><rect x="0.8" y="0.8" width="2.4" height="2.4"/><rect x="18.8" y="0.8" width="2.4" height="2.4"/><rect x="0.8" y="18.3" width="2.4" height="2.4"/><rect x="6" y="5" width="2.2" height="2.2"/><rect x="14" y="5" width="2.2" height="2.2"/><rect x="6" y="13" width="2.2" height="2.2"/></g><path d="M13.5 20.5 L15.5 17 L21.5 11 L23.5 13 L17.5 19Z" fill="#f3b43c"/><circle cx="22.5" cy="11.8" r="2" fill="#e8282c"/><path d="M12.5 23 L13.5 20 L16 21.5Z" fill="#555"/></g>
 </defs>
 <use href="#tlskt" x="219" y="957"/>
 <use href="#tlext" x="255.7" y="957"/><use href="#tlext" x="291.7" y="957"/><use href="#tlext" x="327.7" y="957"/><use href="#tlext" x="363.7" y="957"/><use href="#tlext" x="399.7" y="957"/><use href="#tlext" x="435.7" y="957"/>
 <use href="#tlskt" x="471" y="957"/>
 <path d="M231 985 V995 H484 V985 M267 985 V995 M303 985 V995 M339 985 V995 M375 985 V995 M411 985 V995 M447 985 V995" fill="none" stroke="#c8c8c8" stroke-width="2"/>
 <path d="M492 948 H510 V954 L505 959 V962 H499 V959 L492 954Z" fill="#666"/>
 <rect x="500" y="958" width="4" height="38" fill="#666"/>
 <!-- settings gear -->
 <g transform="translate(1888,969)" fill="#777">
  <circle r="8.5"/>
  <rect x="-2.6" y="-12" width="5.2" height="24"/><rect x="-2.6" y="-12" width="5.2" height="24" transform="rotate(45)"/><rect x="-2.6" y="-12" width="5.2" height="24" transform="rotate(90)"/><rect x="-2.6" y="-12" width="5.2" height="24" transform="rotate(135)"/>
  <circle r="4" fill="#f1f1f1"/>
 </g>
 <!-- taskbar -->
 <defs><linearGradient id="win" x1="0" y1="0" x2="1" y2="1"><stop offset="0" stop-color="#9fe3ff"/><stop offset="1" stop-color="#0b8cf0"/></linearGradient></defs>
 <g fill="url(#win)"><rect x="31" y="1027.5" width="16.8" height="16.8" rx="1.5"/><rect x="49.2" y="1027.5" width="16.8" height="16.8" rx="1.5"/><rect x="31" y="1045.7" width="16.8" height="16.8" rx="1.5"/><rect x="49.2" y="1045.7" width="16.8" height="16.8" rx="1.5"/></g>
 <circle cx="113.5" cy="1042" r="8" fill="none" stroke="#222" stroke-width="2.4"/><path d="M119 1048 L124.5 1053.5" stroke="#222" stroke-width="2.6" stroke-linecap="round"/>
 <rect x="434" y="1036" width="26.5" height="24.5" rx="2" fill="#5c5c5c"/>
 <rect x="443" y="1027" width="27" height="25" rx="2" fill="#e8e8e8"/>
 <rect x="443" y="1036" width="17.5" height="16" fill="#b5b5b5"/>
 <!-- chrome -->
 <g transform="translate(517.9,1043.8)">
  <circle r="18" fill="#dd3b2f"/>
  <path d="M0 0 L-15.6 -9 A18 18 0 0 0 9 15.6Z" fill="#2ba24c"/>
  <path d="M0 0 L9 15.6 A18 18 0 0 0 15.6 -9Z" fill="#fdc734"/>
  <path d="M0 -18 A18 18 0 0 1 15.6 9 L0 0Z" fill="#fdc734" opacity="0"/>
  <circle r="8.3" fill="#fff"/><circle r="6.6" fill="#3a7ff0"/>
 </g>
 <!-- spotify -->
 <circle cx="584" cy="1043.8" r="16.5" fill="#1ed760"/>
 <path d="M573.5 1038.5 C580 1036 589 1036.5 595 1040 M575 1044 C580.5 1042 588 1042.5 593 1045 M576.5 1049 C581 1047.5 586.5 1048 590.5 1050" fill="none" stroke="#111" stroke-width="2.6" stroke-linecap="round"/>
 <!-- settings -->
 <g transform="translate(649.8,1043.8)" fill="#8a9099">
  <circle r="13.5"/>
  <rect x="-4.5" y="-17.5" width="9" height="35" rx="2"/><rect x="-4.5" y="-17.5" width="9" height="35" rx="2" transform="rotate(60)"/><rect x="-4.5" y="-17.5" width="9" height="35" rx="2" transform="rotate(120)"/>
  <circle r="9" fill="#e8e8e8"/><circle r="6.8" fill="#1a64b8"/>
 </g>
 <!-- explorer -->
 <path d="M698 1031 Q698 1028 701 1028 H709 L712 1031 H731 Q734 1031 734 1034 V1060 H698Z" fill="#f8c93c"/>
 <rect x="698" y="1034" width="36" height="26.5" fill="#fdd653"/>
 <path d="M704 1060.5 V1052 Q704 1049 707 1049 H725 Q728 1049 728 1052 V1060.5Z" fill="#1b7fd6"/>
 <rect x="711" y="1052" width="10" height="1.6" fill="#0f4f8a"/>
 <!-- resource monitor -->
 <rect x="763.8" y="1030" width="36" height="27.5" rx="1.5" fill="#0d62b8"/>
 <path d="M763.8 1044 L768 1037 L772 1043 L777 1033 L782 1041 L786 1035 L791 1044 L796 1039 L799.8 1043 V1057.5 H763.8Z" fill="#3aa3e8"/>
 <path d="M763.8 1050 L769 1044 L773 1049 L778 1040 L783 1049 L787 1043 L792 1051 L799.8 1046 V1057.5 H763.8Z" fill="#bfe8fb"/>
 <!-- excel -->
 <rect x="838" y="1028" width="27" height="31.7" rx="2" fill="#1d6f42"/>
 <rect x="851" y="1028" width="14" height="10.5" fill="#33c481"/><rect x="851" y="1038.5" width="14" height="10.5" fill="#21a366"/><rect x="851" y="1049" width="14" height="10.7" fill="#185c37"/>
 <rect x="830" y="1035" width="18.5" height="18.5" rx="2" fill="#107c41"/>
 <text x="839.3" y="1049.5" text-anchor="middle" font-family="Liberation Sans" font-weight="bold" font-size="12" fill="#fff">X</text>
 <!-- fusion highlight -->
 <rect x="884.5" y="1014.5" width="59" height="59" rx="6" fill="#2a3834" stroke="#34423e" stroke-width="1"/>
 <path d="M897 1044 V1029 L902 1026 H928 V1055 H897Z" fill="#fa9544"/>
 <rect x="900.5" y="1026" width="27.5" height="29" rx="1.5" fill="#f96f0a"/>
 <rect x="900.5" y="1052" width="30.5" height="10" fill="#b7470a"/>
 <rect x="928" y="1032" width="3" height="21" fill="#d25a08"/>
 <text x="914.5" y="1047" text-anchor="middle" font-family="Liberation Sans" font-weight="bold" font-size="16" fill="#fff">F</text>
 <text x="915" y="1060" text-anchor="middle" font-family="Liberation Sans" font-weight="bold" font-size="6.5" fill="#fbd3b8">FUS</text>
 <rect x="901.7" y="1068.3" width="24" height="4.8" rx="2.4" fill="#a9aeac"/>
 <!-- solidworks -->
 <path d="M962 1033 L978 1026 L996 1031 V1054 L980 1061 L962 1054Z" fill="#b3141c"/>
 <path d="M962 1033 L978 1026 L996 1031 L980 1037Z" fill="#e8262d"/>
 <text x="970" y="1053" text-anchor="middle" font-family="Liberation Sans" font-weight="bold" font-size="15" fill="#fff">S</text>
 <text x="986.5" y="1051" text-anchor="middle" font-family="Liberation Sans" font-weight="bold" font-size="13" fill="#fff">W</text>
 <rect x="974" y="1051" width="23.5" height="9.5" rx="2" fill="#000"/>
 <text x="985.7" y="1059.5" text-anchor="middle" font-family="Liberation Sans" font-weight="bold" font-size="9" fill="#fff">2023</text>
 <!-- arduino -->
 <rect x="1029" y="1026.7" width="33.5" height="33.3" rx="8" fill="#1b9aa0"/>
 <path d="M1045.7 1043.3 C1041 1037.5 1033.5 1038 1033.5 1043.3 C1033.5 1048.6 1041 1049 1045.7 1043.3 C1050.5 1037.5 1058 1038 1058 1043.3 C1058 1048.6 1050.5 1049 1045.7 1043.3Z" fill="none" stroke="#e5f4f4" stroke-width="2.3"/>
 <path d="M1037 1043.3 H1041 M1050.5 1043.3 H1054 M1052.25 1041.5 V1045" stroke="#e5f4f4" stroke-width="1.2"/>
 <!-- notepad -->
 <rect x="1097.5" y="1028" width="28.3" height="31" rx="1.5" fill="#5cc2ef"/>
 <rect x="1097.5" y="1055.5" width="28.3" height="6.5" fill="#c85b14"/>
 <rect x="1097.5" y="1055.5" width="28.3" height="2.5" fill="#f0ece4"/>
 <path d="M1104 1036.5 H1120 M1104 1042.5 H1120 M1104 1048.5 H1120" stroke="#0e5c8c" stroke-width="1.8"/>
 <g fill="#0e5c8c"><circle cx="1102.5" cy="1027.5" r="1.6"/><circle cx="1108.3" cy="1027.5" r="1.6"/><circle cx="1114.2" cy="1027.5" r="1.6"/><circle cx="1120" cy="1027.5" r="1.6"/></g>
 <!-- indicators -->
 <g fill="#8b9592"><rect x="513.5" y="1068.5" width="9" height="4.3" rx="2.1"/><rect x="579.5" y="1068.5" width="9" height="4.3" rx="2.1"/><rect x="645.5" y="1068.5" width="9" height="4.3" rx="2.1"/><rect x="711.5" y="1068.5" width="9" height="4.3" rx="2.1"/><rect x="777.5" y="1068.5" width="9" height="4.3" rx="2.1"/></g>
 <!-- tray -->
 <path d="M1539.5 1047.5 L1547 1040 L1554.5 1047.5" fill="none" stroke="#fff" stroke-width="1.6"/>
 <path d="M1586 1052.5 C1580 1052.5 1580 1044 1586 1044 C1587 1038 1596 1036 1599 1042 C1606 1041 1608.5 1052.5 1602 1052.5Z" fill="#e6e6e6"/>
 <path d="M1586 1044 C1587 1038 1596 1036 1599 1042 C1594 1042 1590 1044 1588 1047Z" fill="#9a9a9a"/>
 <g font-family="Liberation Sans" fill="#fff">
  <text x="1652" y="1040" text-anchor="middle" font-size="16.5">ENG</text>
  <text x="1652" y="1062.5" text-anchor="middle" font-size="16.5">IS</text>
  <text x="1892" y="1038" text-anchor="end" font-size="17.5">9:40 PM</text>
  <text x="1892" y="1061.5" text-anchor="end" font-size="18.5">4/9/2025</text>
 </g>
 <path d="M1697.5 1041 C1704 1034 1714 1034 1720.5 1041 M1701 1044.5 C1705.5 1040 1712.5 1040 1717 1044.5 M1704.5 1048 C1707 1045.5 1711 1045.5 1713.5 1048" fill="none" stroke="#fff" stroke-width="1.7"/>
 <circle cx="1709" cy="1050.5" r="1.7" fill="#fff"/>
 <path d="M1733.5 1040.5 H1737.5 L1743 1035 V1052.5 L1737.5 1047 H1733.5Z" fill="none" stroke="#fff" stroke-width="1.5"/>
 <path d="M1746.5 1040 C1748 1042 1748 1045.5 1746.5 1047.5 M1749.5 1037.5 C1752.5 1041 1752.5 1046.5 1749.5 1050" fill="none" stroke="#fff" stroke-width="1.5"/>
 <path d="M1753 1035 C1757.5 1040 1757.5 1047.5 1753 1052.5" fill="none" stroke="#777" stroke-width="1.3"/>
 <rect x="1769" y="1037.5" width="21" height="13.5" rx="2.5" fill="none" stroke="#fff" stroke-width="1.6"/>
 <rect x="1790.5" y="1041.5" width="2.5" height="5.5" rx="1" fill="#fff"/>
 <rect x="1771" y="1039.5" width="14" height="9.5" fill="#ddd"/>
 <path d="M1775 1032 L1771 1040 H1775 L1773 1046" fill="none" stroke="#fff" stroke-width="1.5"/>
</svg>

</body></html>
